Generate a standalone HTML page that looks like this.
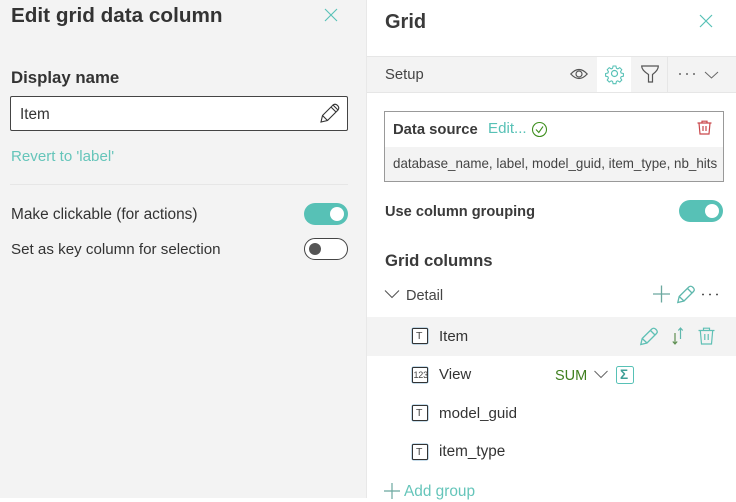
<!DOCTYPE html>
<html><head><meta charset="utf-8"><style>
html,body{margin:0;padding:0}
body{width:736px;height:498px;overflow:hidden;background:#fff;position:relative;font-family:"Liberation Sans",sans-serif;color:#333}
.t{position:absolute;white-space:nowrap;line-height:20px;font-size:15px}
.a{position:absolute}
svg{position:absolute;overflow:visible;fill:none}
.tg{position:absolute;width:44px;height:22px;border-radius:11px;box-sizing:border-box}
.on{background:#57c1b6}
.on:after{content:"";position:absolute;right:4px;top:4px;width:14px;height:14px;border-radius:50%;background:#fff}
.off{background:#fff;border:1px solid #444}
.off:after{content:"";position:absolute;left:4px;top:4px;width:12px;height:12px;border-radius:50%;background:#555}
.ty{position:absolute;left:411.500px;width:16.500px;height:16px;border:1.300px solid #333;border-radius:1.500px;box-sizing:border-box;background:#fff;box-shadow:0 0 0 .4px #6aa3c8}
.g{position:absolute;left:416px;white-space:nowrap;font-size:10.500px;line-height:12px;color:#444;font-family:"Liberation Sans",sans-serif}
</style></head><body>
<div class="a" style="left:0;top:0;width:366px;height:498px;background:#f3f3f3"></div>
<div class="a" style="left:366px;top:0;width:1px;height:498px;background:#e8e8e8"></div>

<div class="t" style="left:11px;top:5px;font-size:20.700px;line-height:22px;font-weight:bold">Edit grid data column</div>
<svg style="left:324px;top:8px" width="14" height="14" stroke="#57c1b6" stroke-width="1.100"><path d="M1 1L13 13M13 1L1 13"/></svg>
<div class="t" style="left:11px;top:68px;font-size:16.800px;font-weight:bold">Display name</div>
<div class="a" style="left:10px;top:96px;width:338px;height:35px;box-sizing:border-box;background:#fff;border:1px solid #444;border-radius:2px"></div>
<div class="t" style="left:20px;top:105px;font-size:15.300px">Item</div>
<svg style="left:320px;top:103px" width="20" height="20" stroke="#333" stroke-width="1.100"><path d="M1 19L2.500 12.500L13 2Q15 .5 17 2L18 3Q19.500 5 18 7L7.500 17.500ZM2.500 12.500L7.500 17.500M11 4L16 9M13 2L18 7"/></svg>
<div class="t" style="left:11px;top:147px;color:#65c5ba;font-size:15.100px">Revert to 'label'</div>
<div class="a" style="left:10px;top:184px;width:338px;height:1px;background:#e6e6e6"></div>
<div class="t" style="left:11px;top:205px;font-size:15.400px">Make clickable (for actions)</div>
<div class="tg on" style="left:304px;top:203px"></div>
<div class="t" style="left:11px;top:240px;font-size:15.150px">Set as key column for selection</div>
<div class="tg off" style="left:304px;top:238px"></div>

<div class="t" style="left:385px;top:11px;font-size:20px;line-height:22px;font-weight:bold;color:#3a3a3a">Grid</div>
<svg style="left:699px;top:14px" width="14" height="14" stroke="#57c1b6" stroke-width="1.200"><path d="M1 1L13 13M13 1L1 13"/></svg>

<div class="a" style="left:367px;top:56px;width:369px;height:37px;box-sizing:border-box;background:#f3f3f3;border-top:1px solid #e6e6e6;border-bottom:1px solid #e6e6e6"></div>
<div class="t" style="left:385px;top:65px;font-size:14.800px;color:#444">Setup</div>
<svg style="left:570px;top:68px" width="18" height="12" stroke="#555" stroke-width="1.200"><path d="M.8 6Q9-3 17.200 6Q9 15 .8 6Z"/><circle cx="9" cy="6" r="3"/></svg>
<div class="a" style="left:597px;top:57px;width:34px;height:35px;background:#fff"></div>
<svg style="left:605px;top:64px" width="19" height="19" viewBox="0 0 24 24" stroke="#57c1b6" stroke-width="1.500"><circle cx="12" cy="12" r="3.800"/><path d="M10 1.500h4l.7 3.200 1.900.8 2.800-1.700 2.800 2.800-1.700 2.800.8 1.900 3.200.7v0l-.0 3.800-3.200.7-.8 1.900 1.700 2.800-2.800 2.800-2.800-1.700-1.900.8-.7 3.200h-4l-.7-3.200-1.900-.8-2.800 1.700-2.800-2.800 1.700-2.800-.8-1.900-3.200-.7v-3.800l3.200-.7.8-1.900-1.700-2.800 2.800-2.800 2.800 1.700 1.900-.8z" transform="translate(1.200 1.200) scale(.9)"/></svg>
<svg style="left:641px;top:65px" width="18" height="18" stroke="#555" stroke-width="1.200"><path d="M.7 1H17.300Q17.500 5 11.500 9.500V17H7.500V9.500Q.5 5 .7 1Z"/></svg>
<div class="a" style="left:667px;top:57px;width:1px;height:35px;background:#e6e6e6"></div>
<svg style="left:679px;top:70px" width="40" height="10" stroke="#666" stroke-width="1"><path d="M0 4h2M7 4h2M14 4h2" stroke-width="1.600"/><path d="M26 2L32.500 8L39 2"/></svg>

<div class="a" style="left:384px;top:111px;width:340px;height:71px;box-sizing:border-box;border:1px solid #999;background:#f3f3f3"><div style="height:35px;background:#fff"></div></div>
<div class="t" style="left:393px;top:120px;font-size:14.800px;font-weight:bold;color:#3a3a3a">Data source</div>
<div class="t" style="left:488px;top:119px;font-size:15.100px;color:#57c1b6">Edit...</div>
<svg style="left:532px;top:122px" width="15" height="15" stroke="#3f8f1f" stroke-width="1.100"><circle cx="7.500" cy="7.500" r="7"/><path d="M4 7.500L6.800 10.500L11 4.500"/></svg>
<svg style="left:697px;top:120px" width="15" height="15" stroke="#c9474b" stroke-width="1.200"><path d="M.5 3H14.500M5 3V1.200H10V3M2 3L3 14H12L13 3M6 6V11M9 6V11"/></svg>
<div class="t" style="left:393px;top:154px;font-size:13.380px;color:#444">database_name, label, model_guid, item_type, nb_hits</div>

<div class="t" style="left:385px;top:202px;font-size:14.600px;font-weight:bold;color:#3a3a3a">Use column grouping</div>
<div class="tg on" style="left:679px;top:200px"></div>
<div class="t" style="left:385px;top:251px;font-size:16.700px;font-weight:bold;color:#3a3a3a">Grid columns</div>

<svg style="left:384px;top:289px" width="16" height="10" stroke="#555" stroke-width="1.100"><path d="M1 1.500L8 8.500L15 1.500"/></svg>
<div class="t" style="left:406px;top:286px;font-size:14.500px;color:#444">Detail</div>
<svg style="left:653px;top:285px" width="18" height="18" stroke="#6ba89f" stroke-width="1.300"><path d="M0 9H17M8.500 .5V17.500"/></svg>
<svg style="left:677px;top:285px" width="18" height="18" stroke="#5fb8ad" stroke-width="1.300"><path d="M.8 17.500L2.200 11.500L11.800 2Q13.600 .5 15.500 2L16.500 3Q18 4.800 16.500 6.500L7 16ZM2.200 11.500L7 16M10.500 3.500L15 8"/></svg>
<svg style="left:702px;top:293px" width="18" height="4" stroke="#555" stroke-width="1.600"><path d="M0 1.500h2M7 1.500h2M14 1.500h2"/></svg>

<div class="a" style="left:367px;top:317px;width:369px;height:39px;background:#f3f3f3"></div>
<div class="ty" style="top:328px"></div>
<div class="g" style="top:330px">T</div>
<div class="t" style="left:439px;top:327px;font-size:15px">Item</div>
<svg style="left:640px;top:327px" width="18" height="18" stroke="#5fc0b5" stroke-width="1.300"><path d="M.8 17.500L2.200 11.500L11.800 2Q13.600 .5 15.500 2L16.500 3Q18 4.800 16.500 6.500L7 16ZM2.200 11.500L7 16M10.500 3.500L15 8"/></svg>
<svg style="left:672px;top:327px" width="12" height="18" stroke-width="1.200"><path d="M3 6V17M.8 14.500L3 17L5.200 14.500" stroke="#5e8f52"/><path d="M8.500 12V1M6.300 3.500L8.500 1L10.700 3.500" stroke="#5fb8ad"/></svg>
<svg style="left:698px;top:327px" width="17" height="18" stroke="#5fc0b5" stroke-width="1.200"><path d="M.5 3.500H16.500M5.500 3.500V1.200H11.500V3.500M2.300 3.500L3.500 17H13.500L14.700 3.500M6.800 7V13M10.200 7V13"/></svg>

<div class="ty" style="top:367px"></div>
<div class="g" style="left:413.500px;top:369px;font-size:9px;letter-spacing:-.2px">123</div>
<div class="t" style="left:439px;top:365px;font-size:15px">View</div>
<div class="t" style="left:555px;top:366px;font-size:14.500px;color:#3f7f1f">SUM</div>
<svg style="left:594px;top:370px" width="14" height="9" stroke="#666" stroke-width="1"><path d="M.5 1L7 7.500L13.500 1"/></svg>
<div class="a" style="left:616px;top:366px;width:18px;height:18px;box-sizing:border-box;border:1.300px solid #57c1b6;border-radius:2.500px"></div>
<div class="t" style="left:620px;top:366px;font-size:13.500px;font-weight:bold;color:#3f9f97;line-height:18px">Σ</div>

<div class="ty" style="top:405px"></div>
<div class="g" style="top:407px">T</div>
<div class="t" style="left:439px;top:404px;font-size:15.100px">model_guid</div>
<div class="ty" style="top:444px"></div>
<div class="g" style="top:446px">T</div>
<div class="t" style="left:439px;top:442px;font-size:15.300px">item_type</div>

<svg style="left:384px;top:483px" width="16" height="16" stroke="#6ba89f" stroke-width="1.200"><path d="M0 8H16M8 0V16"/></svg>
<div class="t" style="left:404px;top:482px;font-size:15.400px;color:#65c5ba">Add group</div>
</body></html>
